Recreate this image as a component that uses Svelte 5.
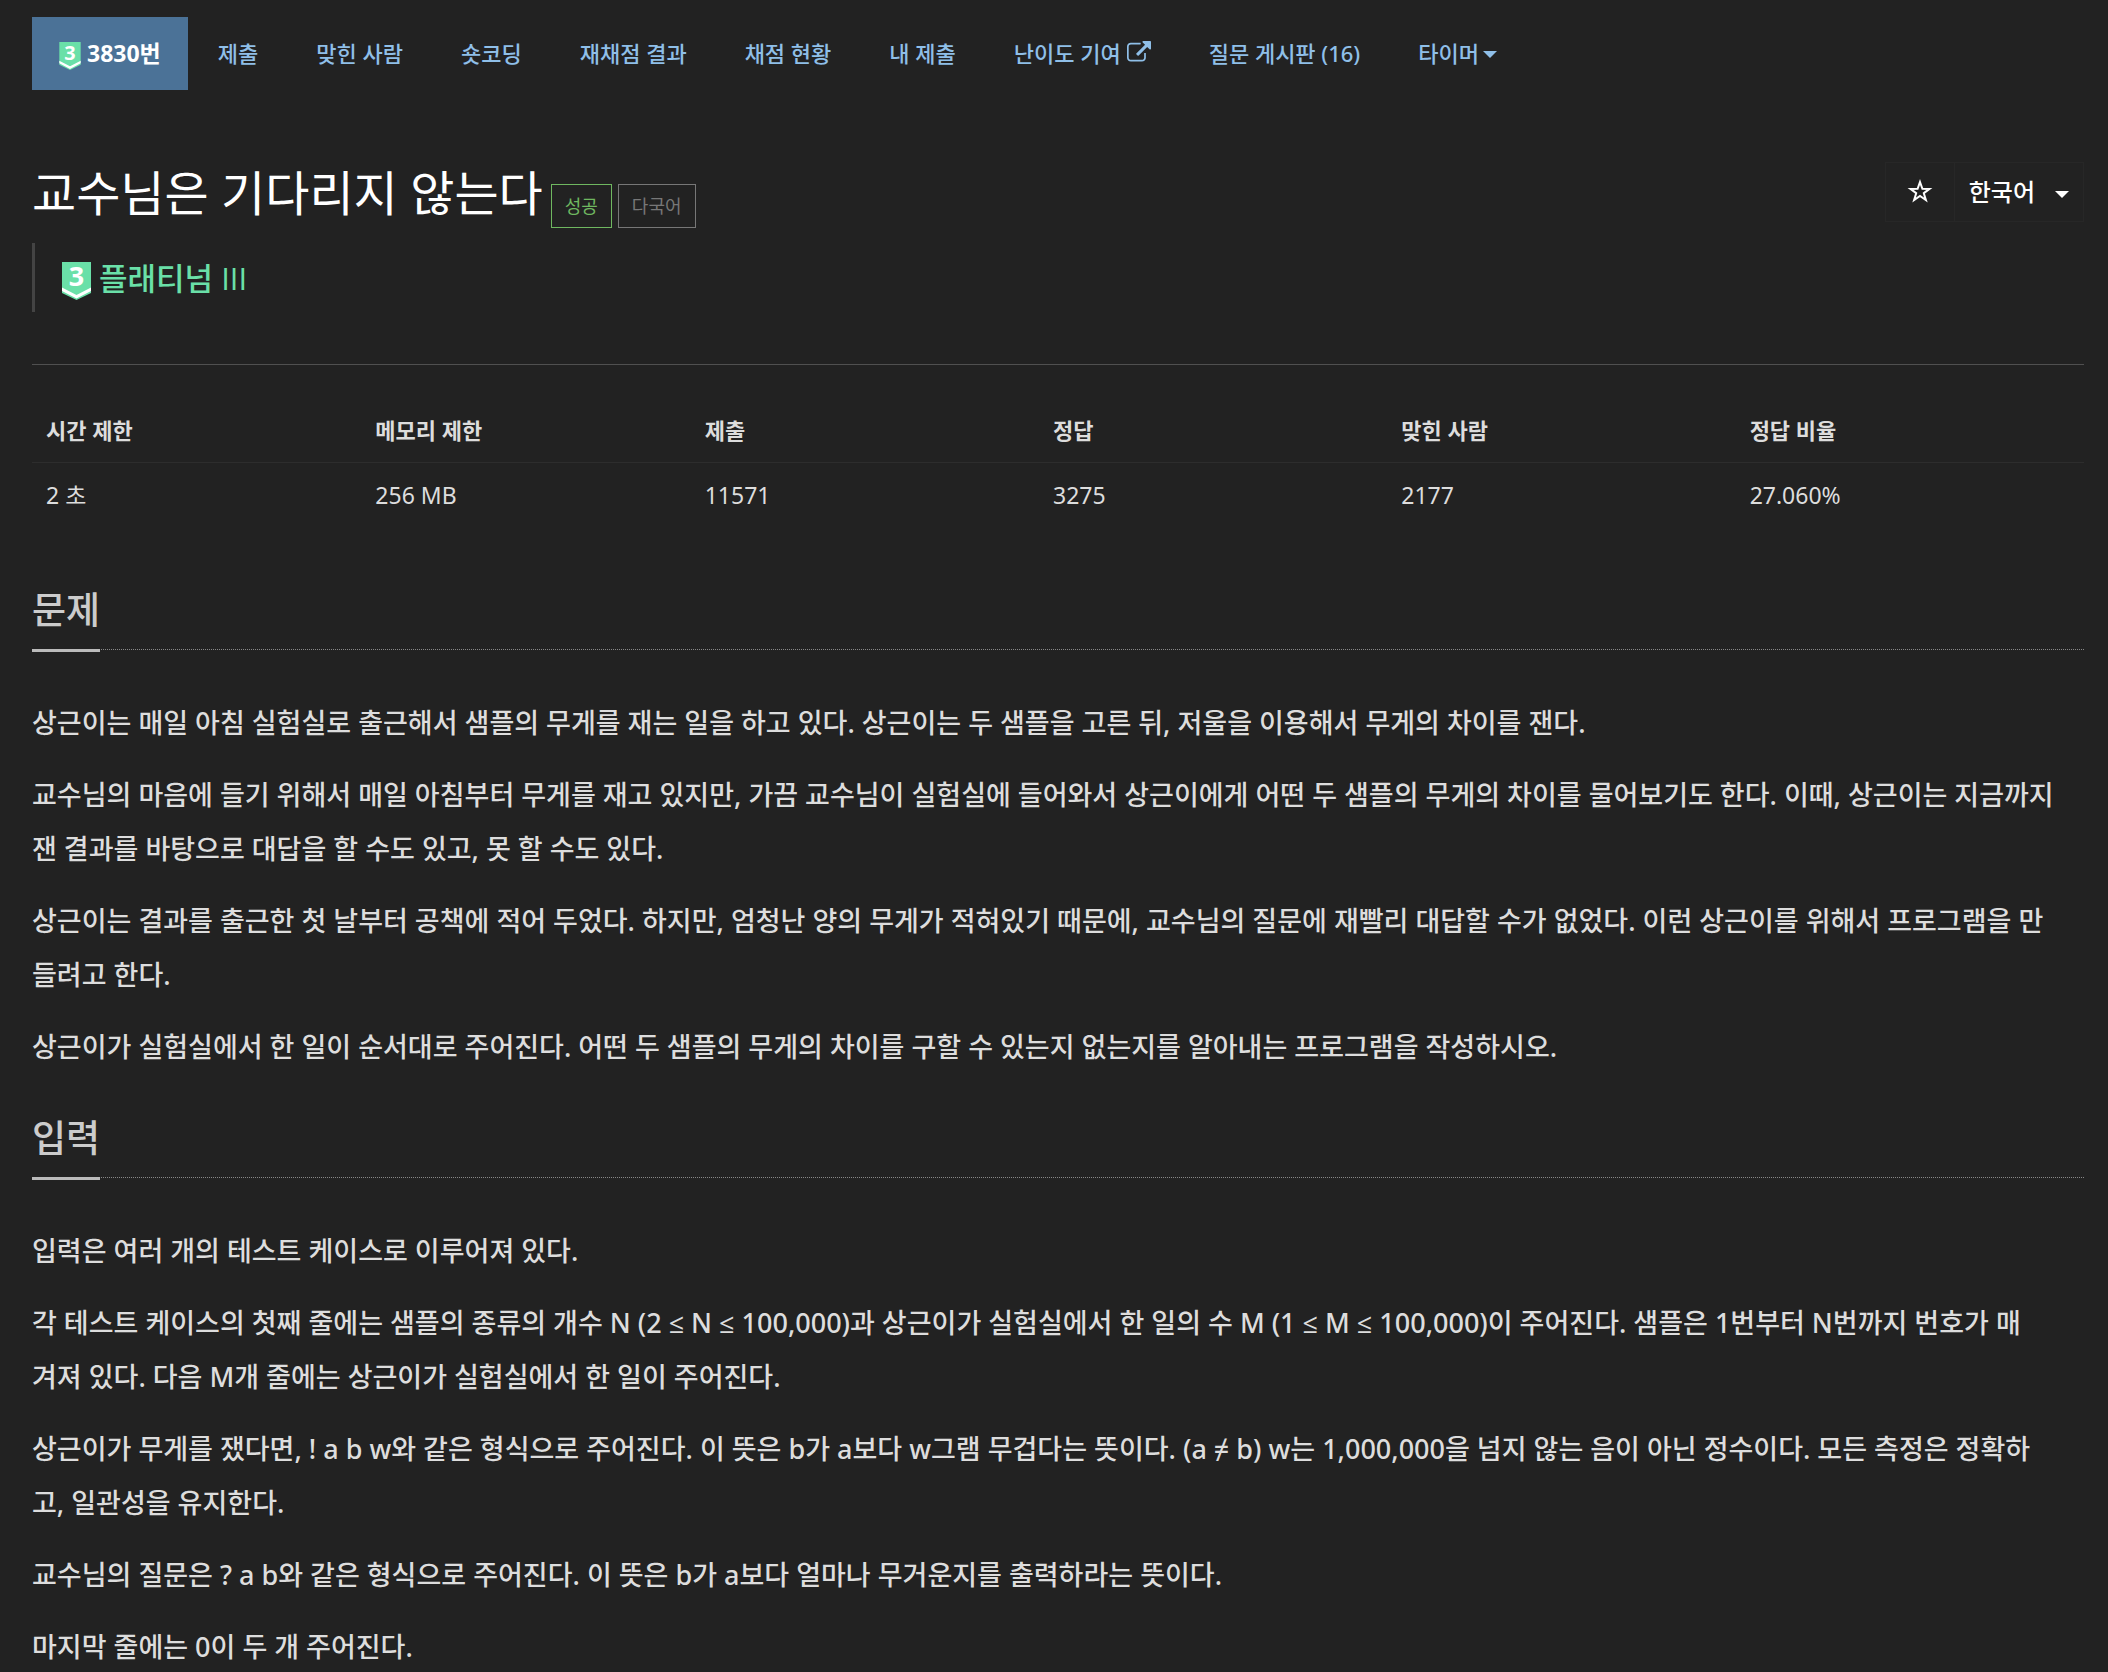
<script lang="ts">
  const menu = ['제출', '맞힌 사람', '숏코딩', '재채점 결과', '채점 현황', '내 제출']

  const info = [
    { label: '시간 제한', value: '2 초' },
    { label: '메모리 제한', value: '256 MB' },
    { label: '제출', value: '11571' },
    { label: '정답', value: '3275' },
    { label: '맞힌 사람', value: '2177' },
    { label: '정답 비율', value: '27.060%' },
  ]

  const sections = [
    {
      id: 'description',
      title: '문제',
      paragraphs: [
        '상근이는 매일 아침 실험실로 출근해서 샘플의 무게를 재는 일을 하고 있다. 상근이는 두 샘플을 고른 뒤, 저울을 이용해서 무게의 차이를 잰다.',
        '교수님의 마음에 들기 위해서 매일 아침부터 무게를 재고 있지만, 가끔 교수님이 실험실에 들어와서 상근이에게 어떤 두 샘플의 무게의 차이를 물어보기도 한다. 이때, 상근이는 지금까지\n잰 결과를 바탕으로 대답을 할 수도 있고, 못 할 수도 있다.',
        '상근이는 결과를 출근한 첫 날부터 공책에 적어 두었다. 하지만, 엄청난 양의 무게가 적혀있기 때문에, 교수님의 질문에 재빨리 대답할 수가 없었다. 이런 상근이를 위해서 프로그램을 만\n들려고 한다.',
        '상근이가 실험실에서 한 일이 순서대로 주어진다. 어떤 두 샘플의 무게의 차이를 구할 수 있는지 없는지를 알아내는 프로그램을 작성하시오.',
      ],
    },
    {
      id: 'input',
      title: '입력',
      paragraphs: [
        '입력은 여러 개의 테스트 케이스로 이루어져 있다.',
        '각 테스트 케이스의 첫째 줄에는 샘플의 종류의 개수 N (2 ≤ N ≤ 100,000)과 상근이가 실험실에서 한 일의 수 M (1 ≤ M ≤ 100,000)이 주어진다. 샘플은 1번부터 N번까지 번호가 매\n겨져 있다. 다음 M개 줄에는 상근이가 실험실에서 한 일이 주어진다.',
        '상근이가 무게를 쟀다면, ! a b w와 같은 형식으로 주어진다. 이 뜻은 b가 a보다 w그램 무겁다는 뜻이다. (a ≠ b) w는 1,000,000을 넘지 않는 음이 아닌 정수이다. 모든 측정은 정확하\n고, 일관성을 유지한다.',
        '교수님의 질문은 ? a b와 같은 형식으로 주어진다. 이 뜻은 b가 a보다 얼마나 무거운지를 출력하라는 뜻이다.',
        '마지막 줄에는 0이 두 개 주어진다.',
      ],
    },
  ]
</script>

{#snippet tier()}
  <svg class="tier" viewBox="0 0 29 38" aria-hidden="true">
    <path d="M0 0h29v31l-14.500 7L0 31z" fill="#6ae0a8" />
    <path d="M0 25.500l14.500 7.500L29 25.500v3.500l-14.500 7.500L0 29z" fill="#fff" />
    <text x="14.500" y="24" text-anchor="middle">3</text>
  </svg>
{/snippet}

<div class="page">
  <nav>
    <a class="active" href="#problem">{@render tier()}<span>3830번</span></a>
    {#each menu as item}
      <a href="#{item}">{item}</a>
    {/each}
    <a href="#contribute">
      난이도 기여
      <svg class="external" viewBox="0 0 1792 1792" aria-hidden="true">
        <path
          d="M1408 928v320q0 119-84.500 203.500t-203.500 84.500h-832q-119 0-203.500-84.500t-84.500-203.500v-832q0-119 84.500-203.500t203.500-84.500h704q14 0 23 9t9 23v64q0 14-9 23t-23 9h-704q-66 0-113 47t-47 113v832q0 66 47 113t113 47h832q66 0 113-47t47-113v-320q0-14 9-23t23-9h64q14 0 23 9t9 23zm384-864v512q0 26-19 45t-45 19-45-19l-176-176-652 652q-10 10-23 10t-23-10l-114-114q-10-10-10-23t10-23l652-652-176-176q-19-19-19-45t19-45 45-19h512q26 0 45 19t19 45z"
        />
      </svg>
    </a>
    <a href="#board">질문 게시판 (16)</a>
    <button type="button">타이머<i class="caret"></i></button>
  </nav>

  <header>
    <div class="heading">
      <h1>교수님은 기다리지 않는다</h1>
      <span class="label success">성공</span>
      <span class="label">다국어</span>
    </div>
    <div class="group">
      <button type="button" class="star" aria-label="즐겨찾기">
        <svg viewBox="0 0 26 26" aria-hidden="true">
          <path
            d="M13 4l2.400 6.800 7.100.1-5.700 4.300 2.100 6.900L13 18l-5.900 4.100 2.100-6.900-5.700-4.300 7.100-.1z"
          />
        </svg>
      </button>
      <button type="button" class="language">한국어<i class="caret"></i></button>
    </div>
  </header>

  <blockquote>{@render tier()}<span>플래티넘 III</span></blockquote>

  <hr />

  <table>
    <thead>
      <tr>
        {#each info as { label }}
          <th scope="col">{label}</th>
        {/each}
      </tr>
    </thead>
    <tbody>
      <tr>
        {#each info as { value }}
          <td>{value}</td>
        {/each}
      </tr>
    </tbody>
  </table>

  {#each sections as section}
    <section id={section.id}>
      <div class="headline"><h2>{section.title}</h2></div>
      {#each section.paragraphs as text}
        <p>{text}</p>
      {/each}
    </section>
  {/each}
</div>

<style>
  :global(body) {
    background: #222;
  }

  .page {
    padding: 17px 24px 0 32px;
    color: #ddd;
    font-family: 'Noto Sans', 'Open Sans', 'Noto Sans CJK KR', sans-serif;
    font-size: 22px;
    font-weight: 500;
    line-height: 32px;
  }

  button {
    display: flex;
    align-items: center;
    border: 0;
    background: none;
    font: inherit;
    cursor: pointer;
  }

  .caret {
    margin-top: 4px;
    border: 7px solid transparent;
    border-top-color: currentColor;
    border-bottom: 0;
  }

  nav {
    display: flex;
    gap: 2px;
    height: 73px;
  }

  nav a,
  nav button {
    display: flex;
    align-items: center;
    gap: 6px;
    padding: 0 28px 2px;
    color: #8fbfe8;
    text-decoration: none;
    white-space: nowrap;
  }

  nav button {
    gap: 4px;
  }

  nav .active {
    padding: 0 27px 2px;
    background: #4b7297;
    color: #fff;
    font-size: 23px;
    font-weight: 700;
  }

  nav .tier {
    width: 22px;
    height: 28px;
    margin-top: 6px;
  }

  .tier {
    overflow: visible;
  }

  .tier text {
    fill: #fff;
    font: 700 27px 'Noto Sans', sans-serif;
  }

  .external {
    width: 24px;
    height: 24px;
    fill: currentColor;
  }

  header {
    display: flex;
    justify-content: space-between;
    align-items: flex-start;
    margin-top: 72px;
    color: #fff;
  }

  .heading {
    display: flex;
    align-items: flex-end;
    gap: 6px;
  }

  h1 {
    margin: 0 2px 0 0;
    padding-bottom: 4px;
    font-size: 48px;
    font-weight: 400;
    line-height: 62px;
  }

  .label {
    padding: 6px 13px;
    border: 1px solid #777;
    color: #777;
    font-size: 18px;
    font-weight: 400;
    line-height: 30px;
  }

  .success {
    border-color: #6fb760;
    color: #6fb760;
  }

  .group {
    display: flex;
    height: 60px;
    border: 1px solid #272727;
    box-sizing: border-box;
  }

  .group button {
    color: #fff;
    font-size: 24px;
  }

  .star {
    padding: 0 21px 2px;
    border-right: 1px solid #272727;
  }

  .star svg {
    width: 26px;
    height: 26px;
    fill: none;
    stroke: currentColor;
    stroke-width: 2;
  }

  .language {
    gap: 20px;
    padding: 0 14px;
  }

  blockquote {
    display: flex;
    align-items: center;
    gap: 8px;
    height: 69px;
    margin: 15px 0 52px;
    padding-left: 27px;
    border-left: 3px solid #444;
    color: #6ae0a8;
    font-family: 'Open Sans', 'Noto Sans CJK KR', sans-serif;
    font-size: 31px;
  }

  blockquote .tier {
    width: 29px;
    height: 38px;
    margin-top: 6px;
  }

  hr {
    margin: 0;
    border: 0;
    border-top: 1px solid #505050;
  }

  table {
    width: 100%;
    margin: 35px 0 56px;
    border-collapse: collapse;
    table-layout: fixed;
  }

  th,
  td {
    width: 17%;
    padding: 14px 14px 16px;
    text-align: left;
  }

  td {
    padding-top: 16px;
    font-size: 23px;
    font-weight: 400;
  }

  th:nth-child(-n + 2) {
    width: 16%;
  }

  th {
    border-bottom: 1px solid #2d2d2d;
  }

  section {
    margin-top: 37px;
  }

  .headline {
    display: flex;
    margin-bottom: 46px;
    border-bottom: 1px dotted #888;
  }

  h2 {
    margin: 0 0 -3px;
    padding-bottom: 12px;
    border-bottom: 3px solid #bbb;
    color: #ccc;
    font-size: 37px;
    font-weight: 500;
    line-height: 54px;
  }

  p {
    margin: 0 0 18px;
    font-size: 27px;
    line-height: 54px;
    white-space: pre-line;
  }
</style>
